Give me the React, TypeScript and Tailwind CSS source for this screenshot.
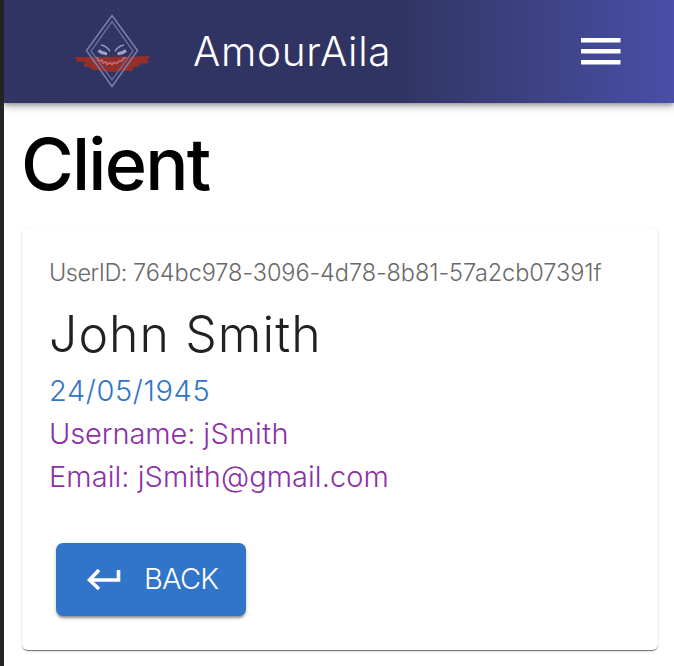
import React from "react";

function Logo() {
  return (
    <svg className="h-[76px] w-[80px] shrink-0" viewBox="0 0 80 76" fill="none">
      <path d="M1 43h15l44-.5 17.500-.5-3.500 4 2 3.500h-8l-2.500 3-5 .5-1.500 4-8-.5q-12 3-25-.5l-6 0-4-3H11l1-5-9-.5 1-2z" fill="#962f2a" />
      <path d="M39 1.500L64.500 36.500 39 72.500 13.500 36.500z" stroke="#7b7fab" strokeWidth="1.500" />
      <path d="M39 7.500L60 37 39 66 18 37z" stroke="#6a6e9d" strokeWidth="1.300" />
      <path d="M28 31q6 1 9 6.500M51 31q-6 1-9 6.500" stroke="#9297bb" strokeWidth="1.500" />
      <path d="M25.500 36.500q4 3.500 8.500 3M53 36.500q-4 3.500-8.500 3" stroke="#9ba4c5" strokeWidth="3.200" />
      <path d="M24 43l2 4 3-1 1 3 3-1 1 2.500 3-2 2 2 2-2 3 1 2-2.500 3 0 1-2.500 3-1" stroke="#b77179" strokeWidth="1.700" />
    </svg>
  );
}

export default function App() {
  return (
    <div className="h-[666px] w-[674px] overflow-hidden border-l-4 border-[#242424] bg-white font-['Inter','Roboto',sans-serif] font-light">
      <header className="flex h-[103px] items-center bg-[linear-gradient(90deg,#323463_0%,#303463_58%,#3d4383_80%,#4a4ea9_100%)] pl-[69px] pr-[53px] text-white shadow-[0_4px_8px_rgba(0,0,0,0.22),0_2px_4px_rgba(0,0,0,0.25)]">
        <Logo />
        <span className="ml-[40px] whitespace-nowrap text-[40.500px] leading-[50px] tracking-[0.700px]">AmourAila</span>
        <svg className="ml-auto h-[27px] w-[40px]" viewBox="0 0 40 27" fill="white">
          <path d="M0 0h39.500v4.500H0zM0 11h39.500v4.500H0zM0 22h39.500v4.500H0z" />
        </svg>
      </header>
      <h1 className="mt-[16px] h-[90px] whitespace-nowrap pl-[17px] text-[72px] font-medium leading-[90px] tracking-[-1.800px] text-black">Client</h1>
      <main className="ml-[18px] mt-[19px] h-[422px] w-[636px] rounded-[6px] bg-white pl-[27px] pt-[30px] shadow-[0_2px_1px_-1px_rgba(0,0,0,0.4),0_1px_1px_rgba(0,0,0,0.2),0_1px_3px_rgba(0,0,0,0.12)]">
        <p className="h-[30px] whitespace-nowrap text-[23.500px] leading-[30px] tracking-[-0.060px] text-[#696969]">
          <span className="tracking-[-0.500px]">UserID: </span>764bc978-3096-4d78-8b81-57a2cb07391f
        </p>
        <h2 className="mt-[16px] h-[60px] whitespace-nowrap text-[50px] leading-[60px] tracking-[1.050px] text-[#212121]">John Smith</h2>
        <p className="mt-[5px] h-[43px] whitespace-nowrap text-[29px] leading-[43px] tracking-[0.600px] text-[#3175ca]">24/05/1945</p>
        <p className="h-[43px] whitespace-nowrap text-[29px] leading-[43px] tracking-[0.450px] text-[#8b31a5]">
          <span className="tracking-[-0.100px]">Username: </span>jSmith
        </p>
        <p className="h-[43px] whitespace-nowrap text-[29px] leading-[43px] tracking-[0.050px] text-[#8b31a5]">Email: jSmith@gmail.com</p>
        <button className="ml-[7px] mt-[45px] flex h-[73px] w-[190px] items-center rounded-[7px] bg-[#3175ca] pl-[31px] text-white shadow-[0_3px_2px_-1px_rgba(0,0,0,0.3),0_2px_4px_rgba(0,0,0,0.2)]">
          <svg className="h-[22px] w-[35px]" viewBox="0 0 35 22" fill="none" stroke="white" strokeWidth="3.600">
            <path d="M31.500 1v10H3M12 1L2.500 11l9.500 9" />
          </svg>
          <span className="mb-[2px] ml-[22px] whitespace-nowrap text-[29px] leading-[40px] tracking-[-0.800px]">BACK</span>
        </button>
      </main>
    </div>
  );
}
